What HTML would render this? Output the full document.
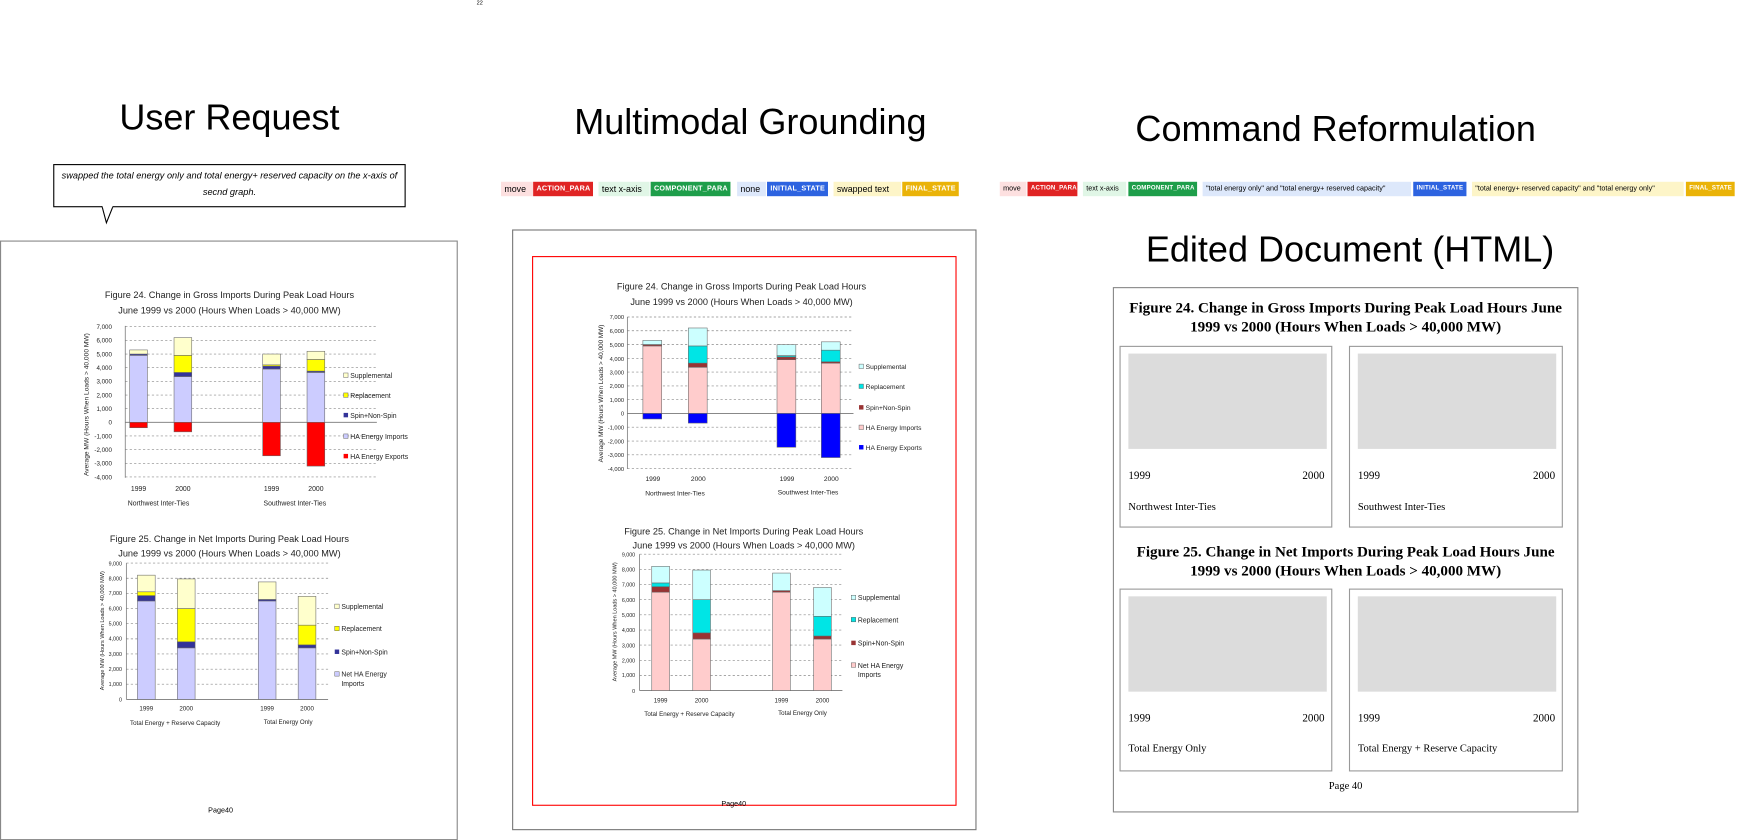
<!DOCTYPE html>
<html><head><meta charset="utf-8">
<style>
html,body{margin:0;padding:0;background:#fff;width:1738px;height:840px;overflow:hidden}
#c{position:absolute;left:0;top:0;width:1568px;height:758px;transform:scale(1.10842);transform-origin:0 0;font-family:"Liberation Sans",sans-serif}
.a{position:absolute}
.h{font-size:32.5px;color:#000;white-space:nowrap;transform:translateX(-50%)}
.tag{position:absolute;top:164px;height:13px;line-height:13px;font-size:8px;padding:0 3px;white-space:nowrap;box-sizing:border-box}
.tl{font-size:6.5px;color:#fff;font-weight:bold;letter-spacing:.2px}
.doc{font-family:"Liberation Serif",serif}
.sub{position:absolute;border:1px solid #999;background:#fff;box-sizing:border-box}
.gray{position:absolute;background:#dcdcdc}
.yr{position:absolute;font-size:10px;font-family:"Liberation Serif",serif}
</style></head><body>
<div id="c">
<div class="a" style="left:430px;top:0;font-size:5px">22</div>
<div class="a h" style="left:207px;top:88px">User Request</div>
<div class="a h" style="left:677px;top:92px">Multimodal Grounding</div>
<div class="a h" style="left:1205px;top:98px">Command Reformulation</div>
<div class="a h" style="left:1218px;top:207px">Edited Document (HTML)</div>

<!-- bubble -->
<div class="a" style="left:48px;top:148px;width:318px;height:39px;border:1px solid #000;box-sizing:border-box;font-size:8.3px;font-style:italic;text-align:center;line-height:15px;padding-top:2px">swapped the total energy only and total energy+ reserved capacity on the x-axis of secnd graph.</div>
<svg class="a" style="left:88px;top:185px" width="20" height="18"><path d="M4 1 L8 16 L14 1" fill="#fff" stroke="#000" stroke-width="1"/><path d="M4.5 1 L13.5 1" stroke="#fff" stroke-width="2"/></svg>

<!-- tags middle -->
<div class="tag" style="left:452px;width:29px;background:#fde0e0">move</div>
<div class="tag tl" style="left:481px;width:54px;background:#e02424">ACTION_PARA</div>
<div class="tag" style="left:540px;width:46px;background:#e0f6e6">text x-axis</div>
<div class="tag tl" style="left:587px;width:72px;background:#1e9e4a">COMPONENT_PARA</div>
<div class="tag" style="left:665px;width:26px;background:#dde8fb">none</div>
<div class="tag tl" style="left:692px;width:55px;background:#2d63e0">INITIAL_STATE</div>
<div class="tag" style="left:752px;width:61px;background:#fdf5c8">swapped text</div>
<div class="tag tl" style="left:814px;width:51px;background:#eab308">FINAL_STATE</div>
<!-- tags right -->
<div class="tag" style="left:902px;width:24px;background:#fde0e0;font-size:6.5px">move</div>
<div class="tag tl" style="left:927px;width:45px;background:#e02424;font-size:5.5px">ACTION_PARA</div>
<div class="tag" style="left:977px;width:39px;background:#e0f6e6;font-size:6.5px">text x-axis</div>
<div class="tag tl" style="left:1018px;width:62px;background:#1e9e4a;font-size:5.5px">COMPONENT_PARA</div>
<div class="tag" style="left:1085px;width:188px;background:#dde8fb;font-size:6.5px">"total energy only" and "total energy+ reserved capacity"</div>
<div class="tag tl" style="left:1275px;width:48px;background:#2d63e0;font-size:5.5px">INITIAL_STATE</div>
<div class="tag" style="left:1328px;width:191px;background:#fdf5c8;font-size:6.5px">"total energy+ reserved capacity" and "total energy only"</div>
<div class="tag tl" style="left:1521px;width:44px;background:#eab308;font-size:5.5px">FINAL_STATE</div>

<!-- panels -->
<div class="a" style="left:0;top:217px;width:413px;height:541px;border:1px solid #888;box-sizing:border-box"></div>
<div class="a" style="left:462px;top:207px;width:419px;height:542px;border:1px solid #777;box-sizing:border-box"></div>
<div class="a" style="left:480px;top:231px;width:383px;height:496px;border:1.5px solid #f00;box-sizing:border-box"></div>

<svg class="a" style="left:0;top:0" width="1000" height="758" font-family="Liberation Sans, sans-serif">
<g font-size="8.3" text-anchor="middle" fill="#222">
<text x="207" y="269">Figure 24. Change in Gross Imports During Peak Load Hours</text>
<text x="207" y="283">June 1999 vs 2000 (Hours When Loads &gt; 40,000 MW)</text>
<text x="207" y="489">Figure 25. Change in Net Imports During Peak Load Hours</text>
<text x="207" y="502">June 1999 vs 2000 (Hours When Loads &gt; 40,000 MW)</text>
<text x="669" y="261">Figure 24. Change in Gross Imports During Peak Load Hours</text>
<text x="669" y="275">June 1999 vs 2000 (Hours When Loads &gt; 40,000 MW)</text>
<text x="671" y="482">Figure 25. Change in Net Imports During Peak Load Hours</text>
<text x="671" y="495">June 1999 vs 2000 (Hours When Loads &gt; 40,000 MW)</text>
</g>
<!-- chart 1 left -->
<g stroke="#888" stroke-width="0.6" stroke-dasharray="2,2">
<line x1="113" x2="340" y1="294.7" y2="294.7"/><line x1="113" x2="340" y1="307" y2="307"/><line x1="113" x2="340" y1="319.4" y2="319.4"/><line x1="113" x2="340" y1="331.7" y2="331.7"/><line x1="113" x2="340" y1="344" y2="344"/><line x1="113" x2="340" y1="356.4" y2="356.4"/><line x1="113" x2="340" y1="368.7" y2="368.7"/><line x1="113" x2="340" y1="393.3" y2="393.3"/><line x1="113" x2="340" y1="405.7" y2="405.7"/><line x1="113" x2="340" y1="418" y2="418"/><line x1="113" x2="340" y1="430.3" y2="430.3"/>
</g>
<line x1="113" x2="113" y1="294" y2="431" stroke="#777" stroke-width="0.7"/>
<line x1="113" x2="340" y1="381" y2="381" stroke="#777" stroke-width="0.8"/>
<g font-size="5.6" text-anchor="end" fill="#222">
<text x="101" y="297">7,000</text><text x="101" y="309">6,000</text><text x="101" y="321.5">5,000</text><text x="101" y="334">4,000</text><text x="101" y="346">3,000</text><text x="101" y="358.5">2,000</text><text x="101" y="371">1,000</text><text x="101" y="383">0</text><text x="101" y="395.5">-1,000</text><text x="101" y="408">-2,000</text><text x="101" y="420">-3,000</text><text x="101" y="432.5">-4,000</text>
</g>
<text transform="translate(80,365) rotate(-90)" font-size="6" text-anchor="middle" fill="#222">Average MW (Hours When Loads &gt; 40,000 MW)</text>
<g stroke="#666" stroke-width="0.5">
<rect x="117" y="320.6" width="16" height="60.4" fill="#ccccff"/><rect x="117" y="319.4" width="16" height="1.2" fill="#333399"/><rect x="117" y="315.7" width="16" height="3.7" fill="#ffffcc"/><rect x="117" y="381" width="16" height="4.9" fill="#ff0000"/>
<rect x="157" y="339.7" width="16" height="41.3" fill="#ccccff"/><rect x="157" y="336" width="16" height="3.7" fill="#333399"/><rect x="157" y="320.6" width="16" height="15.4" fill="#ffff00"/><rect x="157" y="304.6" width="16" height="16" fill="#ffffcc"/><rect x="157" y="381" width="16" height="8.6" fill="#ff0000"/>
<rect x="237" y="332.9" width="16" height="48.1" fill="#ccccff"/><rect x="237" y="330.4" width="16" height="2.5" fill="#333399"/><rect x="237" y="329.2" width="16" height="1.2" fill="#ffff00"/><rect x="237" y="319.4" width="16" height="9.8" fill="#ffffcc"/><rect x="237" y="381" width="16" height="30.2" fill="#ff0000"/>
<rect x="277" y="336" width="16" height="45" fill="#ccccff"/><rect x="277" y="334.8" width="16" height="1.2" fill="#333399"/><rect x="277" y="324.3" width="16" height="10.5" fill="#ffff00"/><rect x="277" y="316.9" width="16" height="7.4" fill="#ffffcc"/><rect x="277" y="381" width="16" height="39.5" fill="#ff0000"/>
</g>
<g font-size="6.2" fill="#222">
<text x="125" y="443" text-anchor="middle">1999</text><text x="165" y="443" text-anchor="middle">2000</text><text x="245" y="443" text-anchor="middle">1999</text><text x="285" y="443" text-anchor="middle">2000</text>
<text x="143" y="456" text-anchor="middle">Northwest Inter-Ties</text><text x="266" y="456" text-anchor="middle">Southwest Inter-Ties</text>
<rect x="310" y="336.5" width="4" height="4" fill="#ffffcc" stroke="#555" stroke-width=".4"/><text x="316" y="341">Supplemental</text>
<rect x="310" y="354.5" width="4" height="4" fill="#ffff00" stroke="#555" stroke-width=".4"/><text x="316" y="359">Replacement</text>
<rect x="310" y="372.5" width="4" height="4" fill="#333399"/><text x="316" y="377">Spin+Non-Spin</text>
<rect x="310" y="391.5" width="4" height="4" fill="#ccccff" stroke="#555" stroke-width=".4"/><text x="316" y="396">HA Energy Imports</text>
<rect x="310" y="409.5" width="4" height="4" fill="#ff0000"/><text x="316" y="414">HA Energy Exports</text>
</g>
<!-- chart 2 left -->
<g stroke="#888" stroke-width="0.6" stroke-dasharray="2,2">
<line x1="114" x2="296" y1="508" y2="508"/><line x1="114" x2="296" y1="521.7" y2="521.7"/><line x1="114" x2="296" y1="535.4" y2="535.4"/><line x1="114" x2="296" y1="549" y2="549"/><line x1="114" x2="296" y1="562.7" y2="562.7"/><line x1="114" x2="296" y1="576.4" y2="576.4"/><line x1="114" x2="296" y1="590" y2="590"/><line x1="114" x2="296" y1="603.7" y2="603.7"/><line x1="114" x2="296" y1="617.3" y2="617.3"/>
</g>
<line x1="114" x2="114" y1="508" y2="631" stroke="#777" stroke-width="0.7"/>
<line x1="114" x2="296" y1="631" y2="631" stroke="#777" stroke-width="0.8"/>
<g font-size="4.8" text-anchor="end" fill="#222">
<text x="110" y="510">9,000</text><text x="110" y="523.5">8,000</text><text x="110" y="537">7,000</text><text x="110" y="551">6,000</text><text x="110" y="564.5">5,000</text><text x="110" y="578">4,000</text><text x="110" y="592">3,000</text><text x="110" y="605.5">2,000</text><text x="110" y="619">1,000</text><text x="110" y="633">0</text>
</g>
<text transform="translate(94,569) rotate(-90)" font-size="5" text-anchor="middle" fill="#222">Average MW (Hours When Loads &gt; 40,000 MW)</text>
<g stroke="#666" stroke-width="0.5">
<rect x="124" y="542.1" width="16" height="88.9" fill="#ccccff"/><rect x="124" y="537.4" width="16" height="4.8" fill="#333399"/><rect x="124" y="533.9" width="16" height="3.4" fill="#ffff00"/><rect x="124" y="518.9" width="16" height="15" fill="#ffffcc"/>
<rect x="160" y="584.5" width="16" height="46.5" fill="#ccccff"/><rect x="160" y="579" width="16" height="5.5" fill="#333399"/><rect x="160" y="549" width="16" height="30" fill="#ffff00"/><rect x="160" y="522.3" width="16" height="26.7" fill="#ffffcc"/>
<rect x="233" y="542.1" width="16" height="88.9" fill="#ccccff"/><rect x="233" y="540.8" width="16" height="1.4" fill="#333399"/><rect x="233" y="525" width="16" height="15.8" fill="#ffffcc"/>
<rect x="269" y="584.5" width="16" height="46.5" fill="#ccccff"/><rect x="269" y="581.8" width="16" height="2.7" fill="#333399"/><rect x="269" y="564" width="16" height="17.8" fill="#ffff00"/><rect x="269" y="538" width="16" height="26" fill="#ffffcc"/>
</g>
<g font-size="5.6" fill="#222">
<text x="132" y="641" text-anchor="middle">1999</text><text x="168" y="641" text-anchor="middle">2000</text><text x="241" y="641" text-anchor="middle">1999</text><text x="277" y="641" text-anchor="middle">2000</text>
<text x="158" y="654" text-anchor="middle">Total Energy + Reserve Capacity</text><text x="260" y="653" text-anchor="middle">Total Energy Only</text>
</g>
<g font-size="6.2" fill="#222">
<rect x="302" y="545" width="4" height="4" fill="#ffffcc" stroke="#555" stroke-width=".4"/><text x="308" y="549.5">Supplemental</text>
<rect x="302" y="565" width="4" height="4" fill="#ffff00" stroke="#555" stroke-width=".4"/><text x="308" y="569.5">Replacement</text>
<rect x="302" y="586" width="4" height="4" fill="#333399"/><text x="308" y="590.5">Spin+Non-Spin</text>
<rect x="302" y="606" width="4" height="4" fill="#ccccff" stroke="#555" stroke-width=".4"/><text x="308" y="610.5">Net HA Energy</text><text x="308" y="619">Imports</text>
</g>
<text x="199" y="733" font-size="6.5" text-anchor="middle">Page40</text>

<!-- chart 1 middle -->
<g stroke="#888" stroke-width="0.6" stroke-dasharray="2,2">
<line x1="566" x2="770" y1="286" y2="286"/><line x1="566" x2="770" y1="298.4" y2="298.4"/><line x1="566" x2="770" y1="310.9" y2="310.9"/><line x1="566" x2="770" y1="323.3" y2="323.3"/><line x1="566" x2="770" y1="335.7" y2="335.7"/><line x1="566" x2="770" y1="348.2" y2="348.2"/><line x1="566" x2="770" y1="360.6" y2="360.6"/><line x1="566" x2="770" y1="385.4" y2="385.4"/><line x1="566" x2="770" y1="397.9" y2="397.9"/><line x1="566" x2="770" y1="410.3" y2="410.3"/><line x1="566" x2="770" y1="422.7" y2="422.7"/>
</g>
<line x1="566" x2="566" y1="286" y2="423" stroke="#777" stroke-width="0.7"/>
<line x1="566" x2="770" y1="373" y2="373" stroke="#777" stroke-width="0.8"/>
<g font-size="5.2" text-anchor="end" fill="#222">
<text x="563" y="288">7,000</text><text x="563" y="300.5">6,000</text><text x="563" y="313">5,000</text><text x="563" y="325.5">4,000</text><text x="563" y="338">3,000</text><text x="563" y="350">2,000</text><text x="563" y="362.5">1,000</text><text x="563" y="375">0</text><text x="563" y="387.5">-1,000</text><text x="563" y="400">-2,000</text><text x="563" y="412.5">-3,000</text><text x="563" y="425">-4,000</text>
</g>
<text transform="translate(544,355) rotate(-90)" font-size="5.8" text-anchor="middle" fill="#222">Average MW (Hours When Loads &gt; 40,000 MW)</text>
<g stroke="#666" stroke-width="0.5">
<rect x="580" y="312.1" width="17" height="60.9" fill="#ffcccc"/><rect x="580" y="310.9" width="17" height="1.2" fill="#993333"/><rect x="580" y="307.1" width="17" height="3.7" fill="#ccffff"/><rect x="580" y="373" width="17" height="5" fill="#0000ff"/>
<rect x="621" y="331.4" width="17" height="41.6" fill="#ffcccc"/><rect x="621" y="327.6" width="17" height="3.7" fill="#993333"/><rect x="621" y="312.1" width="17" height="15.5" fill="#00e5e5"/><rect x="621" y="295.9" width="17" height="16.2" fill="#ccffff"/><rect x="621" y="373" width="17" height="8.7" fill="#0000ff"/>
<rect x="701" y="324.5" width="17" height="48.5" fill="#ffcccc"/><rect x="701" y="322" width="17" height="2.5" fill="#993333"/><rect x="701" y="320.8" width="17" height="1.2" fill="#00e5e5"/><rect x="701" y="310.9" width="17" height="9.9" fill="#ccffff"/><rect x="701" y="373" width="17" height="30.5" fill="#0000ff"/>
<rect x="741" y="327.6" width="17" height="45.4" fill="#ffcccc"/><rect x="741" y="326.4" width="17" height="1.2" fill="#993333"/><rect x="741" y="315.8" width="17" height="10.6" fill="#00e5e5"/><rect x="741" y="308.4" width="17" height="7.5" fill="#ccffff"/><rect x="741" y="373" width="17" height="39.8" fill="#0000ff"/>
</g>
<g font-size="6" fill="#222">
<text x="589" y="434" text-anchor="middle">1999</text><text x="630" y="434" text-anchor="middle">2000</text><text x="710" y="434" text-anchor="middle">1999</text><text x="750" y="434" text-anchor="middle">2000</text>
<text x="609" y="447" text-anchor="middle">Northwest Inter-Ties</text><text x="729" y="446" text-anchor="middle">Southwest Inter-Ties</text>
<rect x="775" y="328.5" width="4" height="4" fill="#ccffff" stroke="#555" stroke-width=".4"/><text x="781" y="333">Supplemental</text>
<rect x="775" y="346.5" width="4" height="4" fill="#00e5e5" stroke="#555" stroke-width=".4"/><text x="781" y="351">Replacement</text>
<rect x="775" y="365.5" width="4" height="4" fill="#993333"/><text x="781" y="370">Spin+Non-Spin</text>
<rect x="775" y="383.5" width="4" height="4" fill="#ffcccc" stroke="#555" stroke-width=".4"/><text x="781" y="388">HA Energy Imports</text>
<rect x="775" y="401.5" width="4" height="4" fill="#0000ff"/><text x="781" y="406">HA Energy Exports</text>
</g>
<!-- chart 2 middle -->
<g stroke="#888" stroke-width="0.6" stroke-dasharray="2,2">
<line x1="577" x2="760" y1="500" y2="500"/><line x1="577" x2="760" y1="513.7" y2="513.7"/><line x1="577" x2="760" y1="527.4" y2="527.4"/><line x1="577" x2="760" y1="541" y2="541"/><line x1="577" x2="760" y1="554.7" y2="554.7"/><line x1="577" x2="760" y1="568.4" y2="568.4"/><line x1="577" x2="760" y1="582" y2="582"/><line x1="577" x2="760" y1="595.7" y2="595.7"/><line x1="577" x2="760" y1="609.3" y2="609.3"/>
</g>
<line x1="577" x2="577" y1="500" y2="623" stroke="#777" stroke-width="0.7"/>
<line x1="577" x2="760" y1="623" y2="623" stroke="#777" stroke-width="0.8"/>
<g font-size="4.8" text-anchor="end" fill="#222">
<text x="573" y="502">9,000</text><text x="573" y="515.5">8,000</text><text x="573" y="529">7,000</text><text x="573" y="543">6,000</text><text x="573" y="556.5">5,000</text><text x="573" y="570">4,000</text><text x="573" y="584">3,000</text><text x="573" y="597.5">2,000</text><text x="573" y="611">1,000</text><text x="573" y="625">0</text>
</g>
<text transform="translate(556,561) rotate(-90)" font-size="5" text-anchor="middle" fill="#222">Average MW (Hours When Loads &gt; 40,000 MW)</text>
<g stroke="#666" stroke-width="0.5">
<rect x="588" y="534.1" width="16" height="88.9" fill="#ffcccc"/><rect x="588" y="529.4" width="16" height="4.8" fill="#993333"/><rect x="588" y="525.9" width="16" height="3.4" fill="#00e5e5"/><rect x="588" y="510.9" width="16" height="15" fill="#ccffff"/>
<rect x="625" y="576.5" width="16" height="46.5" fill="#ffcccc"/><rect x="625" y="571" width="16" height="5.5" fill="#993333"/><rect x="625" y="541" width="16" height="30" fill="#00e5e5"/><rect x="625" y="514.3" width="16" height="26.7" fill="#ccffff"/>
<rect x="697" y="534.1" width="16" height="88.9" fill="#ffcccc"/><rect x="697" y="532.8" width="16" height="1.4" fill="#993333"/><rect x="697" y="517" width="16" height="15.8" fill="#ccffff"/>
<rect x="734" y="576.5" width="16" height="46.5" fill="#ffcccc"/><rect x="734" y="573.8" width="16" height="2.7" fill="#993333"/><rect x="734" y="556" width="16" height="17.8" fill="#00e5e5"/><rect x="734" y="530" width="16" height="26" fill="#ccffff"/>
</g>
<g font-size="5.6" fill="#222">
<text x="596" y="634" text-anchor="middle">1999</text><text x="633" y="634" text-anchor="middle">2000</text><text x="705" y="634" text-anchor="middle">1999</text><text x="742" y="634" text-anchor="middle">2000</text>
<text x="622" y="646" text-anchor="middle">Total Energy + Reserve Capacity</text><text x="724" y="645" text-anchor="middle">Total Energy Only</text>
</g>
<g font-size="6.2" fill="#222">
<rect x="768" y="537" width="4" height="4" fill="#ccffff" stroke="#555" stroke-width=".4"/><text x="774" y="541.5">Supplemental</text>
<rect x="768" y="557" width="4" height="4" fill="#00e5e5" stroke="#555" stroke-width=".4"/><text x="774" y="561.5">Replacement</text>
<rect x="768" y="578" width="4" height="4" fill="#993333"/><text x="774" y="582.5">Spin+Non-Spin</text>
<rect x="768" y="598" width="4" height="4" fill="#ffcccc" stroke="#555" stroke-width=".4"/><text x="774" y="602.5">Net HA Energy</text><text x="774" y="611">Imports</text>
</g>
<text x="662" y="727" font-size="6.5" text-anchor="middle">Page40</text>
</svg>

<!-- edited doc -->
<div class="a doc" style="left:1004px;top:259px;width:420px;height:474px;border:1px solid #888;box-sizing:border-box">
 <div class="a" style="left:0;top:9px;width:418px;text-align:center;font-weight:bold;font-size:13.6px;line-height:17px">Figure 24. Change in Gross Imports During Peak Load Hours June<br>1999 vs 2000 (Hours When Loads &gt; 40,000 MW)</div>
 <div class="sub" style="left:5px;top:52px;width:192px;height:164px"><div class="gray" style="left:7px;top:6px;width:179px;height:86px"></div><div class="yr" style="left:7px;top:111px">1999</div><div class="yr" style="right:6px;top:111px">2000</div><div class="yr" style="left:7px;top:140px;font-size:9.5px">Northwest Inter-Ties</div></div>
 <div class="sub" style="left:212px;top:52px;width:193px;height:164px"><div class="gray" style="left:7px;top:6px;width:179px;height:86px"></div><div class="yr" style="left:7px;top:111px">1999</div><div class="yr" style="right:6px;top:111px">2000</div><div class="yr" style="left:7px;top:140px;font-size:9.5px">Southwest Inter-Ties</div></div>
 <div class="a" style="left:0;top:229px;width:418px;text-align:center;font-weight:bold;font-size:13.6px;line-height:17px">Figure 25. Change in Net Imports During Peak Load Hours June<br>1999 vs 2000 (Hours When Loads &gt; 40,000 MW)</div>
 <div class="sub" style="left:5px;top:271px;width:192px;height:165px"><div class="gray" style="left:7px;top:6px;width:179px;height:86px"></div><div class="yr" style="left:7px;top:111px">1999</div><div class="yr" style="right:6px;top:111px">2000</div><div class="yr" style="left:7px;top:139px;font-size:9.5px">Total Energy Only</div></div>
 <div class="sub" style="left:212px;top:271px;width:193px;height:165px"><div class="gray" style="left:7px;top:6px;width:179px;height:86px"></div><div class="yr" style="left:7px;top:111px">1999</div><div class="yr" style="right:6px;top:111px">2000</div><div class="yr" style="left:7px;top:139px;font-size:9.5px">Total Energy + Reserve Capacity</div></div>
 <div class="a" style="left:0;top:445px;width:418px;text-align:center;font-size:9.5px">Page 40</div>
</div>
</div>
</body></html>
